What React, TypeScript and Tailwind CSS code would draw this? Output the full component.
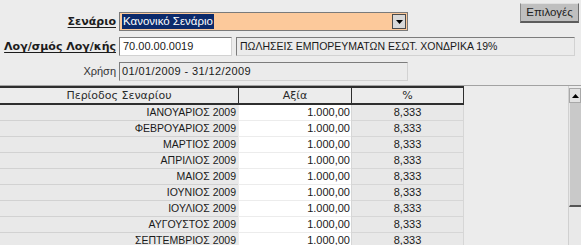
import React from 'react';

const months = [
  'ΙΑΝΟΥΑΡΙΟΣ',
  'ΦΕΒΡΟΥΑΡΙΟΣ',
  'ΜΑΡΤΙΟΣ',
  'ΑΠΡΙΛΙΟΣ',
  'ΜΑΙΟΣ',
  'ΙΟΥΝΙΟΣ',
  'ΙΟΥΛΙΟΣ',
  'ΑΥΓΟΥΣΤΟΣ',
  'ΣΕΠΤΕΜΒΡΙΟΣ',
];

const sunken =
  'border border-t-[#7c7c7c] border-l-[#7c7c7c] border-r-[#d2d2d2] border-b-[#d2d2d2]';

const Label: React.FC<{ bold?: boolean; children: React.ReactNode }> = ({ bold, children }) => (
  <div className="w-[116px] shrink-0 text-right leading-[19px]">
    {bold ? (
      <span
        className="text-[11px] font-bold text-[#1c1c1c] underline underline-offset-2"
        style={{ fontFamily: '"DejaVu Sans", Verdana, sans-serif' }}
      >
        {children}
      </span>
    ) : (
      <span className="text-[11px] text-[#333]">{children}</span>
    )}
  </div>
);

const App: React.FC = () => {
  return (
    <div
      className="w-[581px] h-[245px] overflow-hidden bg-[#ececec] text-[11px] text-[#1a1a1a]"
      style={{ fontFamily: '"Liberation Sans", Arial, sans-serif' }}
    >
      {/* form area */}
      <div className="h-[86px] border-b border-[#a2a2a2] pt-[12px] flex flex-col gap-[6px]">
        <div className="flex items-start">
          <Label bold>Σενάριο</Label>
          <div className="ml-[3px] w-[289px] h-[19px] flex items-center bg-[#fcc99b] border border-[#7a7a7a] pl-[2px] pr-[1px]">
            <span className="bg-[#0c2a6b] text-white leading-[15px] px-[1px] text-[11.5px]">Κανονικό Σενάριο</span>
            <div className="ml-auto w-[14px] h-[15px] bg-[#d9d9d9] border border-[#4a4a4a] flex items-center justify-center">
              <svg width="7" height="4" viewBox="0 0 7 4">
                <polygon points="0,0 7,0 3.5,4" fill="#000" />
              </svg>
            </div>
          </div>
          <button
            type="button"
            className="ml-auto mr-[2px] -mt-[9px] w-[59px] h-[20px] bg-[#bfbfbf] border border-t-[#e0e0e0] border-l-[#8a8a8a] border-r-[#6a6a6a] border-b-2 border-b-[#5c5c5c] text-[11.5px] text-[#222] leading-none"
          >
            Επιλογές
          </button>
        </div>

        <div className="flex items-start">
          <Label bold>Λογ/σμός Λογ/κής</Label>
          <div className={`ml-[3px] w-[113px] h-[19px] bg-white ${sunken} px-[3px] leading-[17px]`}>
            70.00.00.0019
          </div>
          <div
            className={`ml-[4px] w-[339px] h-[19px] bg-[#ebebeb] ${sunken} px-[3px] leading-[17px] whitespace-nowrap text-[10.5px]`}
          >
            ΠΩΛΗΣΕΙΣ ΕΜΠΟΡΕΥΜΑΤΩΝ ΕΣΩΤ. ΧΟΝΔΡΙΚΑ 19%
          </div>
        </div>

        <div className="flex items-start">
          <Label>Χρήση</Label>
          <div className={`ml-[3px] w-[289px] h-[19px] bg-[#ebebeb] ${sunken} px-[2px] leading-[17px] tracking-[0.4px]`}>
            01/01/2009 - 31/12/2009
          </div>
        </div>
      </div>

      {/* grid area */}
      <div className="flex">
        <div className="w-[464px] shrink-0">
          <div
            className="flex h-[19px] bg-[#ececec] border-t-2 border-b-2 border-[#2e2e2e] text-[#2a2a2a] leading-[15px]"
            style={{ fontFamily: '"DejaVu Sans", Verdana, sans-serif' }}
          >
            <div className="w-[238px] text-center">Περίοδος Σεναρίου</div>
            <div className="w-[113px] border-l border-[#2e2e2e] text-center">Αξία</div>
            <div className="w-[113px] border-l border-r border-[#2e2e2e] text-center">%</div>
          </div>
          {months.map((m) => (
            <div key={m} className="flex h-[16px] leading-[15px]">
              <div className="w-[238px] bg-[#e9e9e9] border-b border-[#d2d2d2] text-right pr-[2px] whitespace-nowrap text-[10.5px]">
                {m} 2009
              </div>
              <div className="w-[113px] bg-white border-l border-b border-[#ececec] text-right pr-[1px]">
                1.000,00
              </div>
              <div className="w-[113px] bg-[#e8e8e8] border-l border-r border-b border-[#d6d6d6] text-center">
                8,333
              </div>
            </div>
          ))}
        </div>

        <div className="flex-1" />

        {/* scrollbar */}
        <div className="w-[13px] shrink-0 flex flex-col pt-[2px] border-l border-[#d0d0d0]">
          <div className="h-[15px] bg-[#e2e2e2] border border-[#a8a8a8] flex items-center justify-center">
            <svg width="7" height="4" viewBox="0 0 7 4">
              <polygon points="3.5,0 7,4 0,4" fill="#000" />
            </svg>
          </div>
          <div className="h-[104px] bg-[#c9c9c9] border-l border-[#e6e6e6] border-b-2 border-b-[#555]" />
          <div className="h-[60px] bg-[#e9e9e9]" />
        </div>
      </div>
    </div>
  );
};

export default App;
